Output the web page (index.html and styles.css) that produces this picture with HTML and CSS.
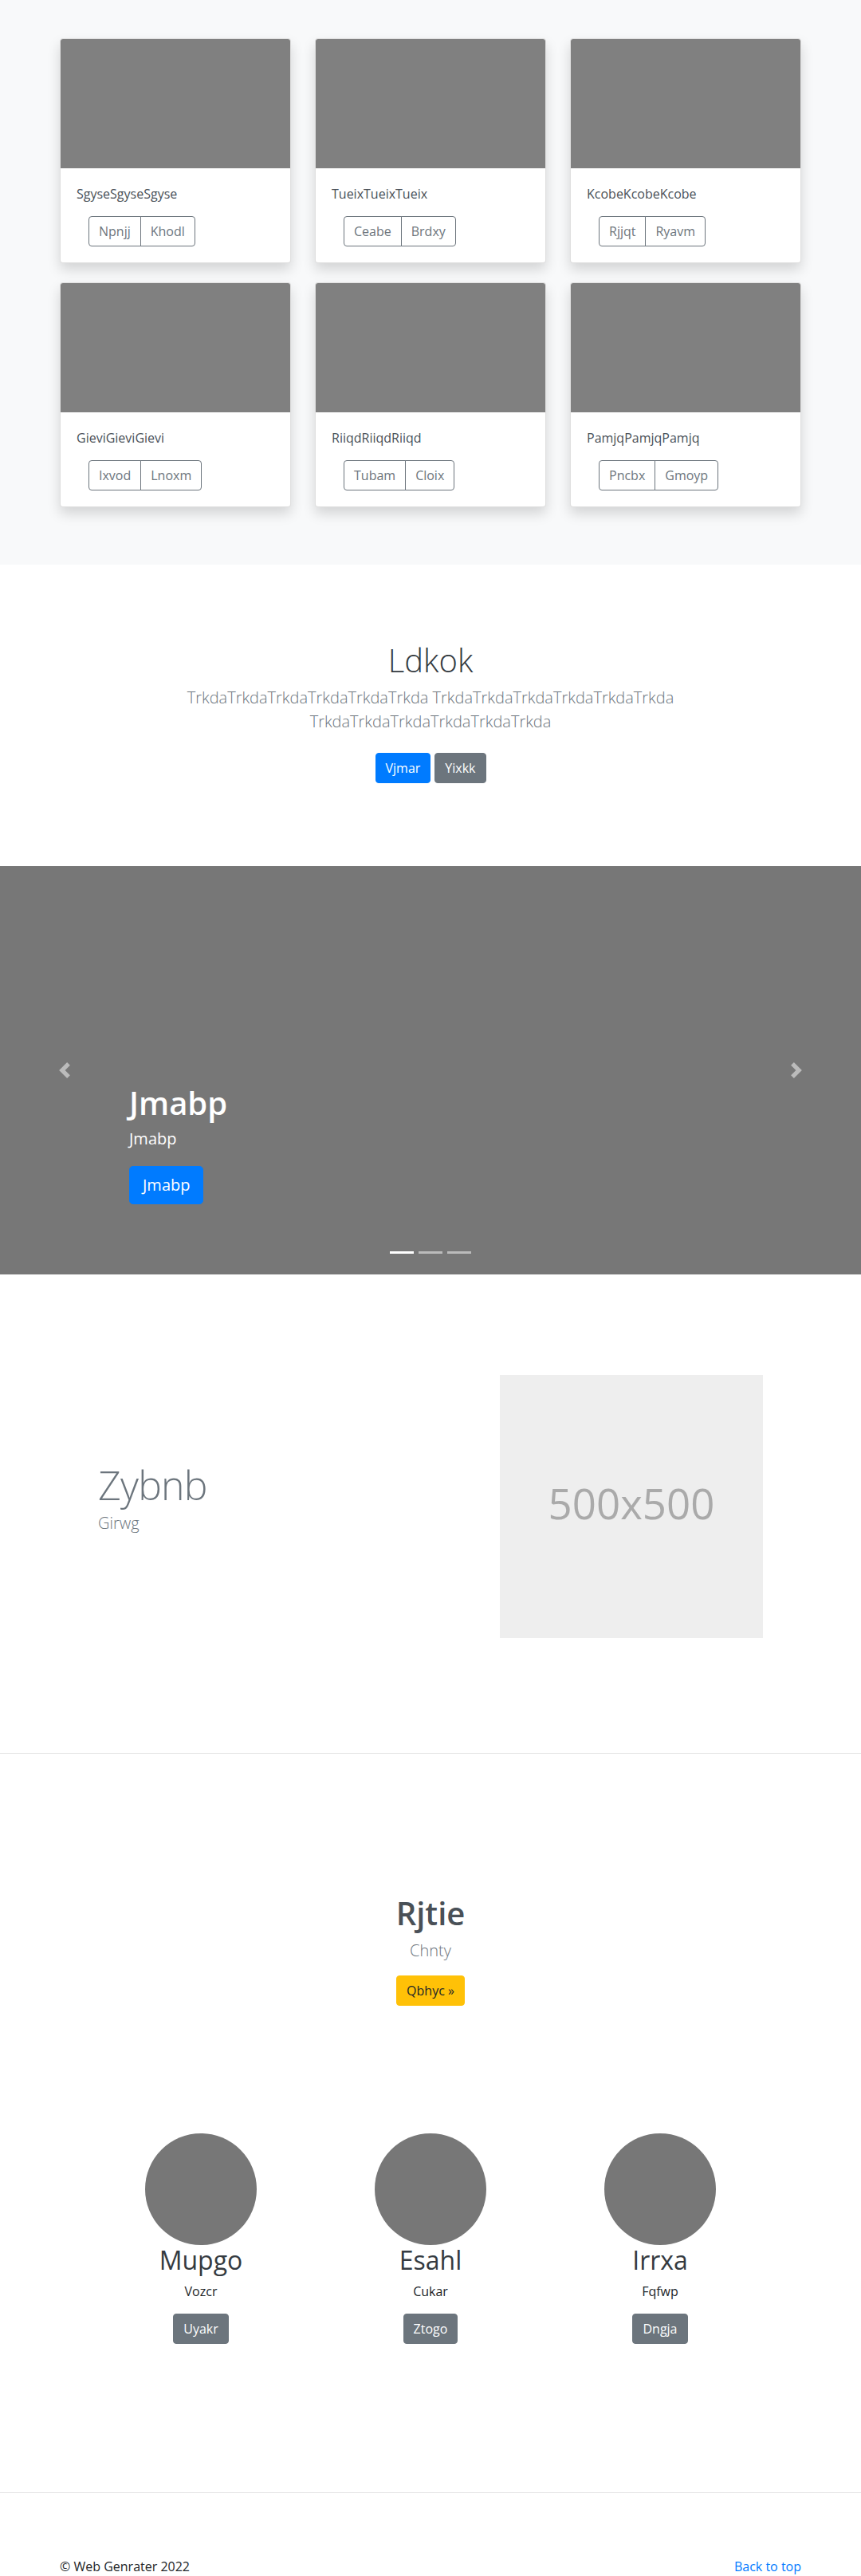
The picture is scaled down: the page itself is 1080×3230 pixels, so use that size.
FILE: index.html
```html
<!DOCTYPE html>
<html lang="en">
<head>
<meta charset="utf-8">
<title>Web Genrater</title>
<link rel="stylesheet" href="styles.css">
</head>
<body>
<main>
  <section class="album">
    <div class="album-grid">
      <div class="card">
        <div class="card-img"></div>
        <div class="card-body">
          <p class="card-text">SgyseSgyseSgyse</p>
          <div class="btn-group"><a class="btn btn-outline">Npnjj</a><a class="btn btn-outline">Khodl</a></div>
        </div>
      </div>
      <div class="card">
        <div class="card-img"></div>
        <div class="card-body">
          <p class="card-text">TueixTueixTueix</p>
          <div class="btn-group"><a class="btn btn-outline">Ceabe</a><a class="btn btn-outline">Brdxy</a></div>
        </div>
      </div>
      <div class="card">
        <div class="card-img"></div>
        <div class="card-body">
          <p class="card-text">KcobeKcobeKcobe</p>
          <div class="btn-group"><a class="btn btn-outline">Rjjqt</a><a class="btn btn-outline">Ryavm</a></div>
        </div>
      </div>
      <div class="card">
        <div class="card-img"></div>
        <div class="card-body">
          <p class="card-text">GieviGieviGievi</p>
          <div class="btn-group"><a class="btn btn-outline">Ixvod</a><a class="btn btn-outline">Lnoxm</a></div>
        </div>
      </div>
      <div class="card">
        <div class="card-img"></div>
        <div class="card-body">
          <p class="card-text">RiiqdRiiqdRiiqd</p>
          <div class="btn-group"><a class="btn btn-outline">Tubam</a><a class="btn btn-outline">Cloix</a></div>
        </div>
      </div>
      <div class="card">
        <div class="card-img"></div>
        <div class="card-body">
          <p class="card-text">PamjqPamjqPamjq</p>
          <div class="btn-group"><a class="btn btn-outline">Pncbx</a><a class="btn btn-outline">Gmoyp</a></div>
        </div>
      </div>
    </div>
  </section>

  <section class="hero">
    <div class="hero-inner">
      <h1 class="hero-title">Ldkok</h1>
      <p class="lead muted">TrkdaTrkdaTrkdaTrkdaTrkdaTrkda TrkdaTrkdaTrkdaTrkdaTrkdaTrkda TrkdaTrkdaTrkdaTrkdaTrkdaTrkda</p>
      <div class="hero-actions">
        <a class="btn btn-primary">Vjmar</a>
        <a class="btn btn-secondary">Yixkk</a>
      </div>
    </div>
  </section>

  <section class="carousel">
    <div class="caption">
      <h1 class="caption-title">Jmabp</h1>
      <p class="caption-text">Jmabp</p>
      <div class="caption-action"><a class="btn btn-lg btn-primary">Jmabp</a></div>
    </div>
    <a class="control control-prev" aria-label="Previous">
      <svg width="20" height="20" viewBox="0 0 8 8"><path fill="#fff" d="M5.25 0l-4 4 4 4 1.5-1.5L4.25 4l2.5-2.5L5.25 0z"/></svg>
    </a>
    <a class="control control-next" aria-label="Next">
      <svg width="20" height="20" viewBox="0 0 8 8"><path fill="#fff" d="M2.75 0l-1.5 1.5L3.75 4l-2.5 2.5L2.75 8l4-4-4-4z"/></svg>
    </a>
    <ol class="indicators">
      <li class="active"></li>
      <li></li>
      <li></li>
    </ol>
  </section>

  <section class="featurette">
    <div class="feat-row">
      <div class="feat-text">
        <h2 class="feat-heading">Zybnb</h2>
        <p class="lead feat-lead">Girwg</p>
      </div>
      <div class="feat-media">
        <svg class="placeholder" width="330" height="330" viewBox="0 0 330 330">
          <rect width="100%" height="100%" fill="#eee"/>
          <text x="50%" y="50%" dy=".3em" text-anchor="middle" fill="#aaa" class="placeholder-text">500x500</text>
        </svg>
      </div>
    </div>
  </section>

  <hr class="divider">

  <section class="cta">
    <h1 class="cta-title">Rjtie</h1>
    <p class="lead muted">Chnty</p>
    <div><a class="btn btn-warning">Qbhyc &raquo;</a></div>
  </section>

  <section class="marketing">
    <div class="person">
      <div class="avatar"></div>
      <h2 class="person-name">Mupgo</h2>
      <p class="person-text">Vozcr</p>
      <a class="btn btn-secondary">Uyakr</a>
    </div>
    <div class="person">
      <div class="avatar"></div>
      <h2 class="person-name">Esahl</h2>
      <p class="person-text">Cukar</p>
      <a class="btn btn-secondary">Ztogo</a>
    </div>
    <div class="person">
      <div class="avatar"></div>
      <h2 class="person-name">Irrxa</h2>
      <p class="person-text">Fqfwp</p>
      <a class="btn btn-secondary">Dngja</a>
    </div>
  </section>

  <hr class="divider">

  <footer class="footer">
    <p>&copy; Web Genrater 2022</p>
    <p><a class="link" href="#">Back to top</a></p>
  </footer>
</main>
</body>
</html>
```

FILE: styles.css
```css
* { box-sizing: border-box; }

body {
  margin: 0;
  font-family: "Open Sans", "Noto Sans", sans-serif;
  font-size: 16px;
  line-height: 1.5;
  color: #212529;
  background: #fff;
}

h1, h2, p { margin: 0; }

/* buttons */
.btn {
  display: inline-block;
  font-size: 16px;
  line-height: 1.5;
  font-weight: 400;
  padding: 6px 12px;
  border: 1px solid transparent;
  border-radius: 4px;
  text-decoration: none;
  cursor: pointer;
}
.btn-outline { color: #6c757d; border-color: #6c757d; background: transparent; }
.btn-primary { color: #fff; background: #007bff; border-color: #007bff; }
.btn-secondary { color: #fff; background: #6c757d; border-color: #6c757d; }
.btn-warning { color: #212529; background: #ffc107; border-color: #ffc107; }
.btn-lg { font-size: 20px; padding: 8px 16px; border-radius: 4.8px; }

/* album */
.album {
  background: #f8f9fa;
  padding: 48px 0 72px;
}
.album-grid {
  width: 930px;
  margin: 0 auto;
  display: grid;
  grid-template-columns: repeat(3, 1fr);
  column-gap: 30px;
  row-gap: 24px;
}
.card {
  background: #fff;
  border: 1px solid rgba(0, 0, 0, .125);
  border-radius: 4px;
  overflow: hidden;
  box-shadow: 0 8px 16px rgba(0, 0, 0, .15);
}
.card-img { height: 162px; background: #808080; }
.card-body { padding: 20px; }
.card-text { margin-bottom: 16px; color: #495057; }
.btn-group { display: inline-flex; margin-left: 15px; }
.btn-group .btn:first-child { border-radius: 4px 0 0 4px; }
.btn-group .btn + .btn { margin-left: -1px; border-radius: 0 4px 4px 0; }

/* hero */
.hero { padding: 96px 15px; text-align: center; }
.hero-inner { max-width: 660px; margin: 0 auto; }
.hero-title { font-size: 40px; font-weight: 300; line-height: 1.2; margin-bottom: 8px; color: #343a40; }
.lead { font-size: 20px; font-weight: 300; line-height: 1.5; }
.muted { color: #6c757d; }
.hero .lead { margin-bottom: 16px; }
.hero-actions { display: flex; justify-content: center; gap: 5px; padding: 8px 0; }

/* carousel */
.carousel {
  position: relative;
  height: 512px;
  background: #777;
  overflow: hidden;
}
.caption {
  position: absolute;
  left: 15%;
  right: 15%;
  bottom: 48px;
  padding: 20px 0;
  color: #fff;
  z-index: 10;
}
.caption-title { font-size: 40px; font-weight: 600; line-height: 1.2; margin-bottom: 6px; }
.caption-text { font-size: 20px; line-height: 1.5; margin-bottom: 19px; }
.caption-action { margin-bottom: 20px; }
.control {
  position: absolute;
  top: 0;
  bottom: 0;
  width: 15%;
  display: flex;
  align-items: center;
  justify-content: center;
  opacity: .5;
}
.control svg { display: block; }
.control-prev { left: 0; }
.control-next { right: 0; }
.indicators {
  position: absolute;
  left: 0;
  right: 0;
  bottom: 26px;
  margin: 0;
  padding: 0;
  list-style: none;
  display: flex;
  justify-content: center;
}
.indicators li {
  width: 30px;
  height: 3px;
  margin: 0 3px;
  background: #fff;
  opacity: .5;
}
.indicators li.active { opacity: 1; }

/* featurette */
.featurette { padding: 126px 0 64px; }
.feat-row {
  width: 864px;
  margin: 0 auto;
  display: flex;
  align-items: center;
}
.feat-text { flex: 0 0 58.3333%; padding: 0 15px; }
.feat-media { flex: 0 0 41.6667%; padding: 0 15px; }
.feat-heading {
  font-size: 50px;
  font-weight: 300;
  line-height: 1;
  letter-spacing: -0.8px;
  color: #6c757d;
  margin-bottom: 8px;
}
.feat-lead { color: #6c757d; margin-bottom: 16px; }
.placeholder { display: block; width: 100%; height: auto; }
.placeholder-text { font-size: 52.8px; font-family: "Open Sans", "Noto Sans", sans-serif; }

.divider {
  margin: 80px 0;
  border: 0;
  border-top: 1px solid rgba(0, 0, 0, .1);
  height: 0;
}

/* call to action */
.cta { padding: 96px 15px 160px; text-align: center; }
.cta-title { font-size: 40px; font-weight: 600; line-height: 1.2; margin-bottom: 8px; color: #495057; }
.cta .lead { margin-bottom: 16px; }

/* marketing */
.marketing {
  display: grid;
  grid-template-columns: repeat(3, 288px);
  justify-content: center;
  padding-bottom: 106px;
  text-align: center;
}
.avatar {
  width: 140px;
  height: 140px;
  border-radius: 50%;
  background: #777;
  margin: 0 auto;
}
.person-name { font-size: 32px; font-weight: 400; line-height: 1.2; margin-bottom: 8px; color: #343a40; }
.person-text { margin: 0 12px 16px; }

/* footer */
.footer {
  width: 930px;
  margin: 0 auto;
  display: flex;
  justify-content: space-between;
}
.link { color: #007bff; text-decoration: none; }
```
